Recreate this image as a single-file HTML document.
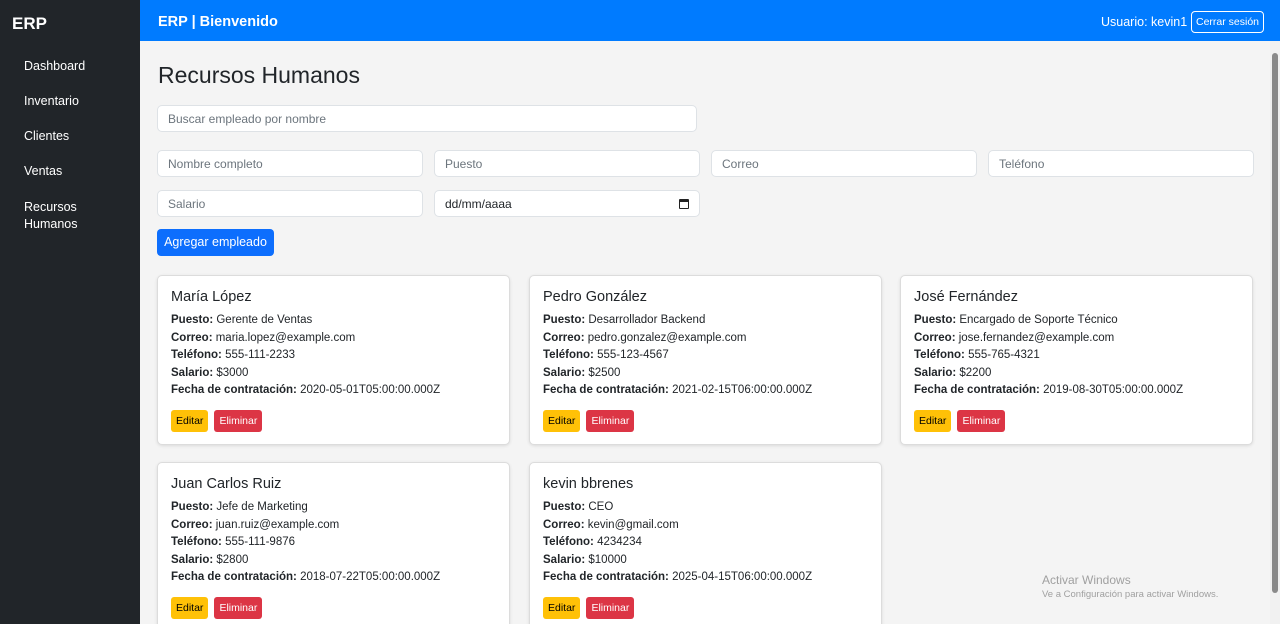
<!DOCTYPE html>
<html><head><meta charset="utf-8"><style>
*{box-sizing:border-box;margin:0;padding:0}
html{overflow:hidden}
body{width:1280px;height:624px;overflow:hidden;font-family:"Liberation Sans",sans-serif;background:#f4f4f4;color:#212529;position:relative}
.side{position:absolute;left:0;top:0;width:140px;height:624px;background:#212529;color:#fff}
.side h1{font-size:17px;font-weight:bold;position:absolute;left:12px;top:14px}
.side a{position:absolute;left:24px;font-size:12.5px;color:#fff;line-height:17px}
.top{position:absolute;left:140px;top:0;width:1140px;height:41px;background:#007bff;color:#fff}
.top .t{position:absolute;left:18px;top:14px;font-size:14.5px;font-weight:bold}
.top .u{position:absolute;left:961px;top:15px;font-size:12.5px}
.top .b{position:absolute;left:1051px;top:11px;width:73px;height:22px;border:1px solid #fff;border-radius:4px;font-size:10.5px;text-align:center;line-height:20px}
.sb{position:absolute;left:1270px;top:41px;width:10px;height:583px;background:#f1f1f1}
.sb div{position:absolute;left:2px;top:12px;width:6px;height:540px;background:#8a8a8a;border-radius:3px}
h2{position:absolute;left:158px;top:62px;font-size:23px;font-weight:500}
.in{position:absolute;background:#fff;border:1px solid #dee2e6;border-radius:5px;font-size:12px;color:#6c757d;padding-left:10px;line-height:27px;height:27px}
.btn{position:absolute;left:157px;top:229px;width:117px;height:27px;background:#0d6efd;color:#fff;border-radius:4px;font-size:12.5px;text-align:center;line-height:27px}
.card{position:absolute;width:353px;height:170px;background:#fff;border:1px solid #dcdcdc;border-radius:5px;box-shadow:0 1px 3px rgba(0,0,0,.1);padding:13px 13px}
.card h3{font-size:14.5px;font-weight:500;margin-bottom:7px}
.card p{font-size:11.5px;line-height:17.5px}
.card .bs{margin-top:10px;display:flex;gap:6px}
.e,.d{font-size:10.5px;height:22px;line-height:22px;padding:0 5px;border-radius:3px}
.e{background:#ffc107;color:#000}.d{background:#dc3545;color:#fff}
.wm{position:absolute;left:1042px;top:573px;color:#a0a0a0;font-size:12px}
.wm small{display:block;font-size:9.5px;margin-top:2px}
</style></head><body>
<div class="side"><h1>ERP</h1>
<a style="top:58px">Dashboard</a><a style="top:93px">Inventario</a><a style="top:128px">Clientes</a><a style="top:163px">Ventas</a><a style="top:199px">Recursos<br>Humanos</a></div>
<div class="top"><span class="t">ERP | Bienvenido</span><span class="u">Usuario: kevin1</span><span class="b">Cerrar sesión</span></div>
<div class="sb"><div></div></div>
<h2>Recursos Humanos</h2>
<div class="in" style="left:157px;top:105px;width:540px">Buscar empleado por nombre</div>
<div class="in" style="left:157px;top:150px;width:266px">Nombre completo</div>
<div class="in" style="left:434px;top:150px;width:266px">Puesto</div>
<div class="in" style="left:711px;top:150px;width:266px">Correo</div>
<div class="in" style="left:988px;top:150px;width:266px">Teléfono</div>
<div class="in" style="left:157px;top:190px;width:266px">Salario</div>
<div class="in" style="left:434px;top:190px;width:266px;color:#212529">dd/mm/aaaa<span style="position:absolute;right:10px;top:8px;width:10px;height:10px;border:1.5px solid #222;border-top-width:3px;border-radius:1px"></span></div>
<div class="btn">Agregar empleado</div>

<div class="card" style="left:157px;top:275px"><h3>María López</h3><p><b>Puesto:</b> Gerente de Ventas<br><b>Correo:</b> maria.lopez@example.com<br><b>Teléfono:</b> 555-111-2233<br><b>Salario:</b> $3000<br><b>Fecha de contratación:</b> 2020-05-01T05:00:00.000Z</p><div class="bs"><span class="e">Editar</span><span class="d">Eliminar</span></div></div>
<div class="card" style="left:529px;top:275px"><h3>Pedro González</h3><p><b>Puesto:</b> Desarrollador Backend<br><b>Correo:</b> pedro.gonzalez@example.com<br><b>Teléfono:</b> 555-123-4567<br><b>Salario:</b> $2500<br><b>Fecha de contratación:</b> 2021-02-15T06:00:00.000Z</p><div class="bs"><span class="e">Editar</span><span class="d">Eliminar</span></div></div>
<div class="card" style="left:900px;top:275px"><h3>José Fernández</h3><p><b>Puesto:</b> Encargado de Soporte Técnico<br><b>Correo:</b> jose.fernandez@example.com<br><b>Teléfono:</b> 555-765-4321<br><b>Salario:</b> $2200<br><b>Fecha de contratación:</b> 2019-08-30T05:00:00.000Z</p><div class="bs"><span class="e">Editar</span><span class="d">Eliminar</span></div></div>
<div class="card" style="left:157px;top:462px"><h3>Juan Carlos Ruiz</h3><p><b>Puesto:</b> Jefe de Marketing<br><b>Correo:</b> juan.ruiz@example.com<br><b>Teléfono:</b> 555-111-9876<br><b>Salario:</b> $2800<br><b>Fecha de contratación:</b> 2018-07-22T05:00:00.000Z</p><div class="bs"><span class="e">Editar</span><span class="d">Eliminar</span></div></div>
<div class="card" style="left:529px;top:462px"><h3>kevin bbrenes</h3><p><b>Puesto:</b> CEO<br><b>Correo:</b> kevin@gmail.com<br><b>Teléfono:</b> 4234234<br><b>Salario:</b> $10000<br><b>Fecha de contratación:</b> 2025-04-15T06:00:00.000Z</p><div class="bs"><span class="e">Editar</span><span class="d">Eliminar</span></div></div>
<div class="wm">Activar Windows<small>Ve a Configuración para activar Windows.</small></div>
</body></html>
